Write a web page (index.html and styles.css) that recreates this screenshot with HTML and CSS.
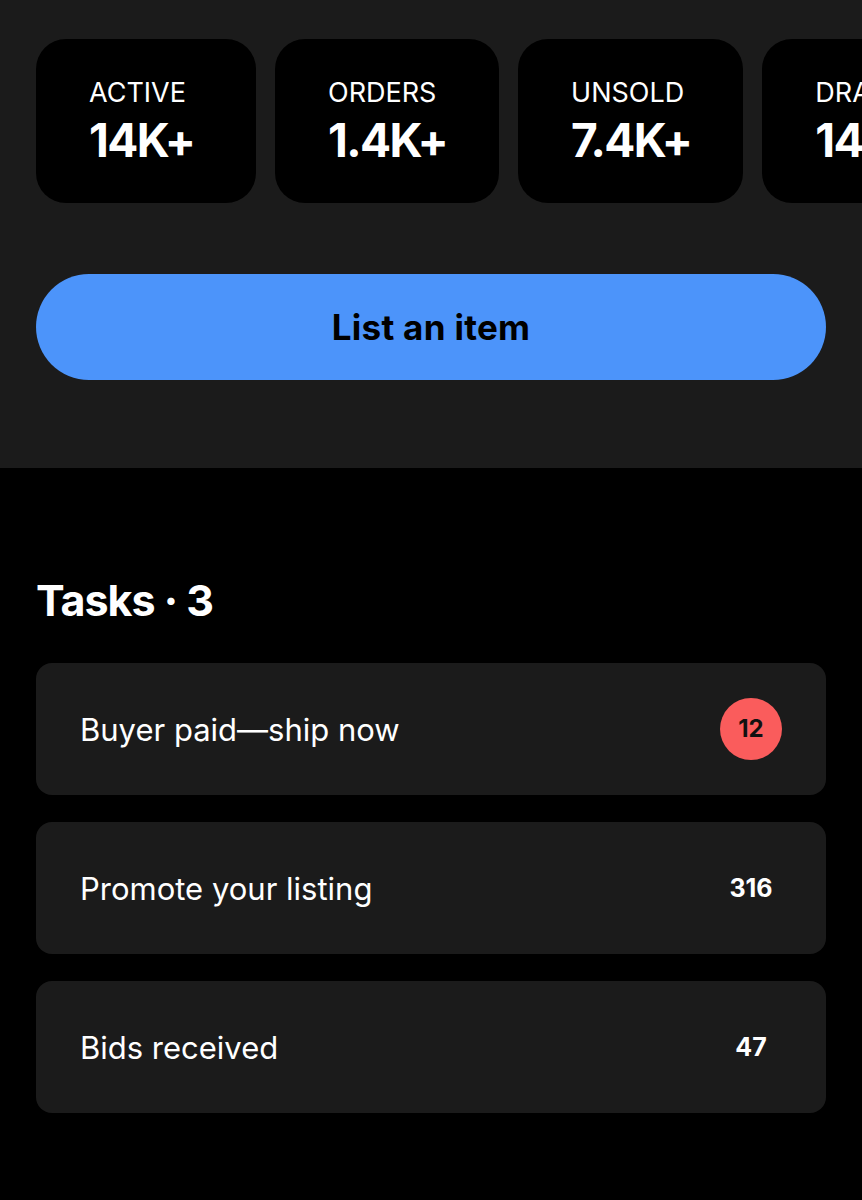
FILE: index.html
```html
<!DOCTYPE html>
<html lang="en">
<head>
    <meta charset="UTF-8">
    <meta name="viewport" content="width=device-width, initial-scale=1.0">
    <title>Selling</title>
    <link rel="stylesheet" href="styles.css">
</head>
<body>
    <section class="hero">
        <div class="stats">
            <div class="stat">
                <span class="stat-label">ACTIVE</span>
                <span class="stat-value">14K+</span>
            </div>
            <div class="stat">
                <span class="stat-label">ORDERS</span>
                <span class="stat-value">1.4K+</span>
            </div>
            <div class="stat">
                <span class="stat-label">UNSOLD</span>
                <span class="stat-value">7.4K+</span>
            </div>
            <div class="stat">
                <span class="stat-label">DRAFTS</span>
                <span class="stat-value">14K+</span>
            </div>
        </div>
        <button class="list-btn">List an item</button>
    </section>

    <section class="tasks">
        <h2 class="tasks-title">Tasks · 3</h2>
        <div class="task-list">
            <div class="task">
                <span class="task-name">Buyer paid—ship now</span>
                <span class="task-count badge">12</span>
            </div>
            <div class="task">
                <span class="task-name">Promote your listing</span>
                <span class="task-count">316</span>
            </div>
            <div class="task">
                <span class="task-name">Bids received</span>
                <span class="task-count">47</span>
            </div>
        </div>
    </section>
</body>
</html>
```

FILE: styles.css
```css
body {
    margin: 0;
    padding: 0;
    background-color: #000;
    color: #fff;
    font-family: Inter, "Open Sans", sans-serif;
    overflow-x: hidden;
}

.hero {
    background-color: #1b1b1b;
    padding: 39px 36px 88px;
}

.stats {
    display: flex;
    gap: 19px;
    margin-right: -36px;
    overflow: hidden;
}

.stat {
    flex-shrink: 0;
    box-sizing: border-box;
    min-width: 220px;
    height: 164px;
    padding: 0 52px 0 53px;
    background-color: #000;
    border-radius: 30px;
    display: flex;
    flex-direction: column;
    justify-content: center;
    gap: 8px;
}

.stat-label {
    font-size: 27px;
    line-height: 30px;
    font-weight: 400;
}

.stat-value {
    font-size: 46px;
    line-height: 48px;
    font-weight: 700;
    letter-spacing: -1.6px;
}

.list-btn {
    display: block;
    width: 100%;
    height: 106px;
    margin-top: 71px;
    border: none;
    border-radius: 53px;
    background-color: #4c94fa;
    color: #000;
    font-family: inherit;
    font-size: 35px;
    font-weight: 700;
    letter-spacing: 0.3px;
}

.tasks {
    padding: 110px 36px 60px;
}

.tasks-title {
    margin: 0 0 41px;
    font-size: 43px;
    line-height: 44px;
    font-weight: 700;
    letter-spacing: -1px;
}

.task-list {
    display: flex;
    flex-direction: column;
    gap: 27px;
}

.task {
    height: 132px;
    box-sizing: border-box;
    padding: 0 44px;
    background-color: #1b1b1b;
    border-radius: 16px;
    display: flex;
    align-items: center;
    justify-content: space-between;
}

.task-name {
    font-size: 31px;
}

.task-count {
    width: 62px;
    text-align: center;
    font-size: 25px;
    font-weight: 700;
}

.badge {
    height: 62px;
    line-height: 62px;
    border-radius: 50%;
    background-color: #fa5c5c;
    color: #111;
    font-size: 24px;
}
```
